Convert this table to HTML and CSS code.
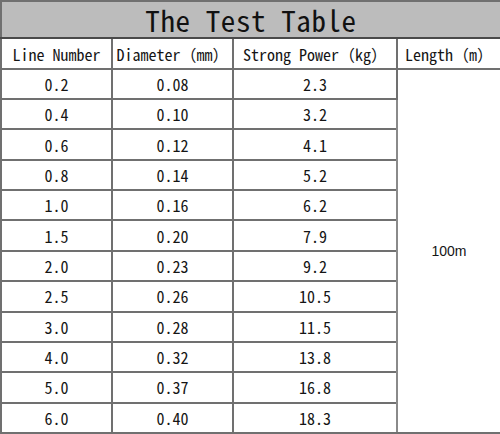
FILE: index.html
```html
<!DOCTYPE html>
<html>
<head>
<meta charset="utf-8">
<link rel="stylesheet" href="styles.css">
</head>
<body>
<table class="spec">
  <colgroup>
    <col class="c1"><col class="c2"><col class="c3"><col class="c4">
  </colgroup>
  <tr class="title-row"><th colspan="4" class="title">The Test Table</th></tr>
  <tr class="head-row">
    <th>Line Number</th>
    <th>Diameter（mm）</th>
    <th>Strong Power（kg）</th>
    <th>Length（m）</th>
  </tr>
  <tr><td>0.2</td><td>0.08</td><td>2.3</td><td rowspan="12" class="len">100m</td></tr>
  <tr><td>0.4</td><td>0.10</td><td>3.2</td></tr>
  <tr><td>0.6</td><td>0.12</td><td>4.1</td></tr>
  <tr><td>0.8</td><td>0.14</td><td>5.2</td></tr>
  <tr><td>1.0</td><td>0.16</td><td>6.2</td></tr>
  <tr><td>1.5</td><td>0.20</td><td>7.9</td></tr>
  <tr><td>2.0</td><td>0.23</td><td>9.2</td></tr>
  <tr><td>2.5</td><td>0.26</td><td>10.5</td></tr>
  <tr><td>3.0</td><td>0.28</td><td>11.5</td></tr>
  <tr><td>4.0</td><td>0.32</td><td>13.8</td></tr>
  <tr><td>5.0</td><td>0.37</td><td>16.8</td></tr>
  <tr><td>6.0</td><td>0.40</td><td>18.3</td></tr>
</table>
</body>
</html>
```

FILE: styles.css
```css
html, body {
  margin: 0;
  padding: 0;
  background: #ffffff;
}
.spec {
  width: 500px;
  height: 434px;
  border-collapse: collapse;
  table-layout: fixed;
  font-family: "Noto Sans Mono CJK JP", "DejaVu Sans Mono", monospace;
  color: #151515;
  border: 2px solid #3a3a3a;
}
.c1 { width: 111px; }
.c2 { width: 121px; }
.c3 { width: 164px; }
.c4 { width: 104px; }
.spec th, .spec td {
  border: 2px solid #707070;
  padding: 0;
  text-align: center;
  vertical-align: middle;
  font-weight: normal;
  font-size: 16px;
  line-height: 18px;
  white-space: nowrap;
}
.spec tr { height: 30px; }
.spec .title-row { height: 37px; }
.spec .head-row { height: 30px; }
.spec .title {
  background: #bcbcbc;
  font-size: 29px;
  line-height: 33px;
  letter-spacing: 0.6px;
  color: #111;
  border-bottom-color: #4a4a4a;
}
.spec .len {
  font-family: "Liberation Sans", Arial, sans-serif;
  font-size: 14px;
  border-left-color: #8a8a8a;
}
```
